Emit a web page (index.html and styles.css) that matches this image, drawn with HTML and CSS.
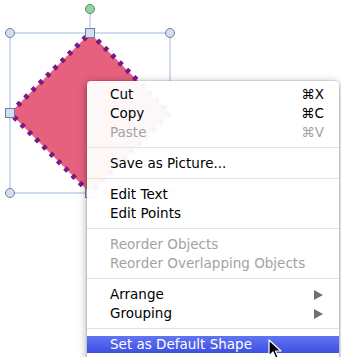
FILE: index.html
```html
<!DOCTYPE html>
<html>
<head>
<meta charset="utf-8">
<link rel="stylesheet" href="styles.css">
</head>
<body>
<div class="canvas">
  <svg class="shape" width="341" height="357" viewBox="0 0 341 357">
    <rect x="10" y="33" width="160" height="160" fill="none" stroke="#cfdcee" stroke-width="2"/>
    <line x1="90" y1="13" x2="90" y2="33" stroke="#cfdcee" stroke-width="2"/>
    <polygon points="90,33 170,113 90,193 10,113" fill="#e5617d"/>
    <polygon points="90,33 170,113 90,193 10,113" fill="none" stroke="#7a1985" stroke-width="5" stroke-dasharray="4.2 6.1"/>
    <circle cx="90" cy="9" r="4.5" fill="#92d3a4" stroke="#5c8a69" stroke-width="1"/>
    <circle cx="10" cy="33" r="4.5" fill="#d3dff0" stroke="#6d7f9c" stroke-width="1"/>
    <circle cx="170" cy="33" r="4.5" fill="#d3dff0" stroke="#6d7f9c" stroke-width="1"/>
    <circle cx="10" cy="193" r="4.5" fill="#d3dff0" stroke="#6d7f9c" stroke-width="1"/>
    <circle cx="170" cy="193" r="4.5" fill="#d3dff0" stroke="#6d7f9c" stroke-width="1"/>
    <rect x="85.5" y="28.5" width="9" height="9" fill="#d3dff0" stroke="#6d7f9c" stroke-width="1"/>
    <rect x="5.5" y="108.5" width="9" height="9" fill="#d3dff0" stroke="#6d7f9c" stroke-width="1"/>
    <rect x="85.5" y="188.5" width="9" height="9" fill="#d3dff0" stroke="#6d7f9c" stroke-width="1"/>
  </svg>

  <div class="menu">
    <div class="item"><span>Cut</span><span class="key">⌘X</span></div>
    <div class="item"><span>Copy</span><span class="key">⌘C</span></div>
    <div class="item disabled"><span>Paste</span><span class="key">⌘V</span></div>
    <div class="sep"></div>
    <div class="item"><span>Save as Picture...</span></div>
    <div class="sep"></div>
    <div class="item"><span>Edit Text</span></div>
    <div class="item"><span>Edit Points</span></div>
    <div class="sep"></div>
    <div class="item disabled"><span>Reorder Objects</span></div>
    <div class="item disabled"><span>Reorder Overlapping Objects</span></div>
    <div class="sep"></div>
    <div class="item"><span>Arrange</span><span class="arrow"></span></div>
    <div class="item"><span>Grouping</span><span class="arrow"></span></div>
    <div class="sep"></div>
    <div class="item active"><span>Set as Default Shape</span></div>
  </div>

  <svg class="cursor" width="14" height="22" viewBox="0 0 14 22">
    <path d="M1 1 L1 17 L5 13 L8 20 L10.5 19 L7.5 12 L13 12 Z" fill="#000" stroke="#fff" stroke-width="1.2" stroke-linejoin="round"/>
  </svg>
</div>
</body>
</html>
```

FILE: styles.css
```css
html, body {
  margin: 0;
  padding: 0;
  background: #ffffff;
}

.canvas {
  position: relative;
  width: 341px;
  height: 357px;
  overflow: hidden;
}

.shape {
  position: absolute;
  left: 0;
  top: 0;
}

.menu {
  position: absolute;
  left: 87px;
  top: 81px;
  width: 252px;
  height: 290px;
  box-sizing: border-box;
  padding-top: 4px;
  background: rgba(255, 255, 255, 0.95);
  border-radius: 4px;
  box-shadow: 0 2px 9px rgba(0, 0, 0, 0.38), 0 0 0 1px rgba(0, 0, 0, 0.08);
  font-family: "DejaVu Sans", sans-serif;
  font-size: 13.5px;
  color: #000;
  display: flex;
  flex-direction: column;
}

.item {
  height: 19px;
  line-height: 19px;
  padding: 0 15px 0 23px;
  display: flex;
  justify-content: space-between;
  align-items: center;
  white-space: nowrap;
}

.item.disabled {
  color: #a3a3a3;
}

.key {
  font-size: 13.5px;
}

.arrow {
  width: 0;
  height: 0;
  border-top: 5px solid transparent;
  border-bottom: 5px solid transparent;
  border-left: 9px solid #707070;
  margin-right: 1px;
}

.sep {
  height: 1px;
  margin: 5px 0 6px;
  background: #e2e2e2;
}

.item.active {
  margin-top: 1px;
  height: 17px;
  line-height: 17px;
  color: #fff;
  background: linear-gradient(#6175f2, #3d4fe2);
}

.cursor {
  position: absolute;
  left: 268px;
  top: 339px;
}
```
